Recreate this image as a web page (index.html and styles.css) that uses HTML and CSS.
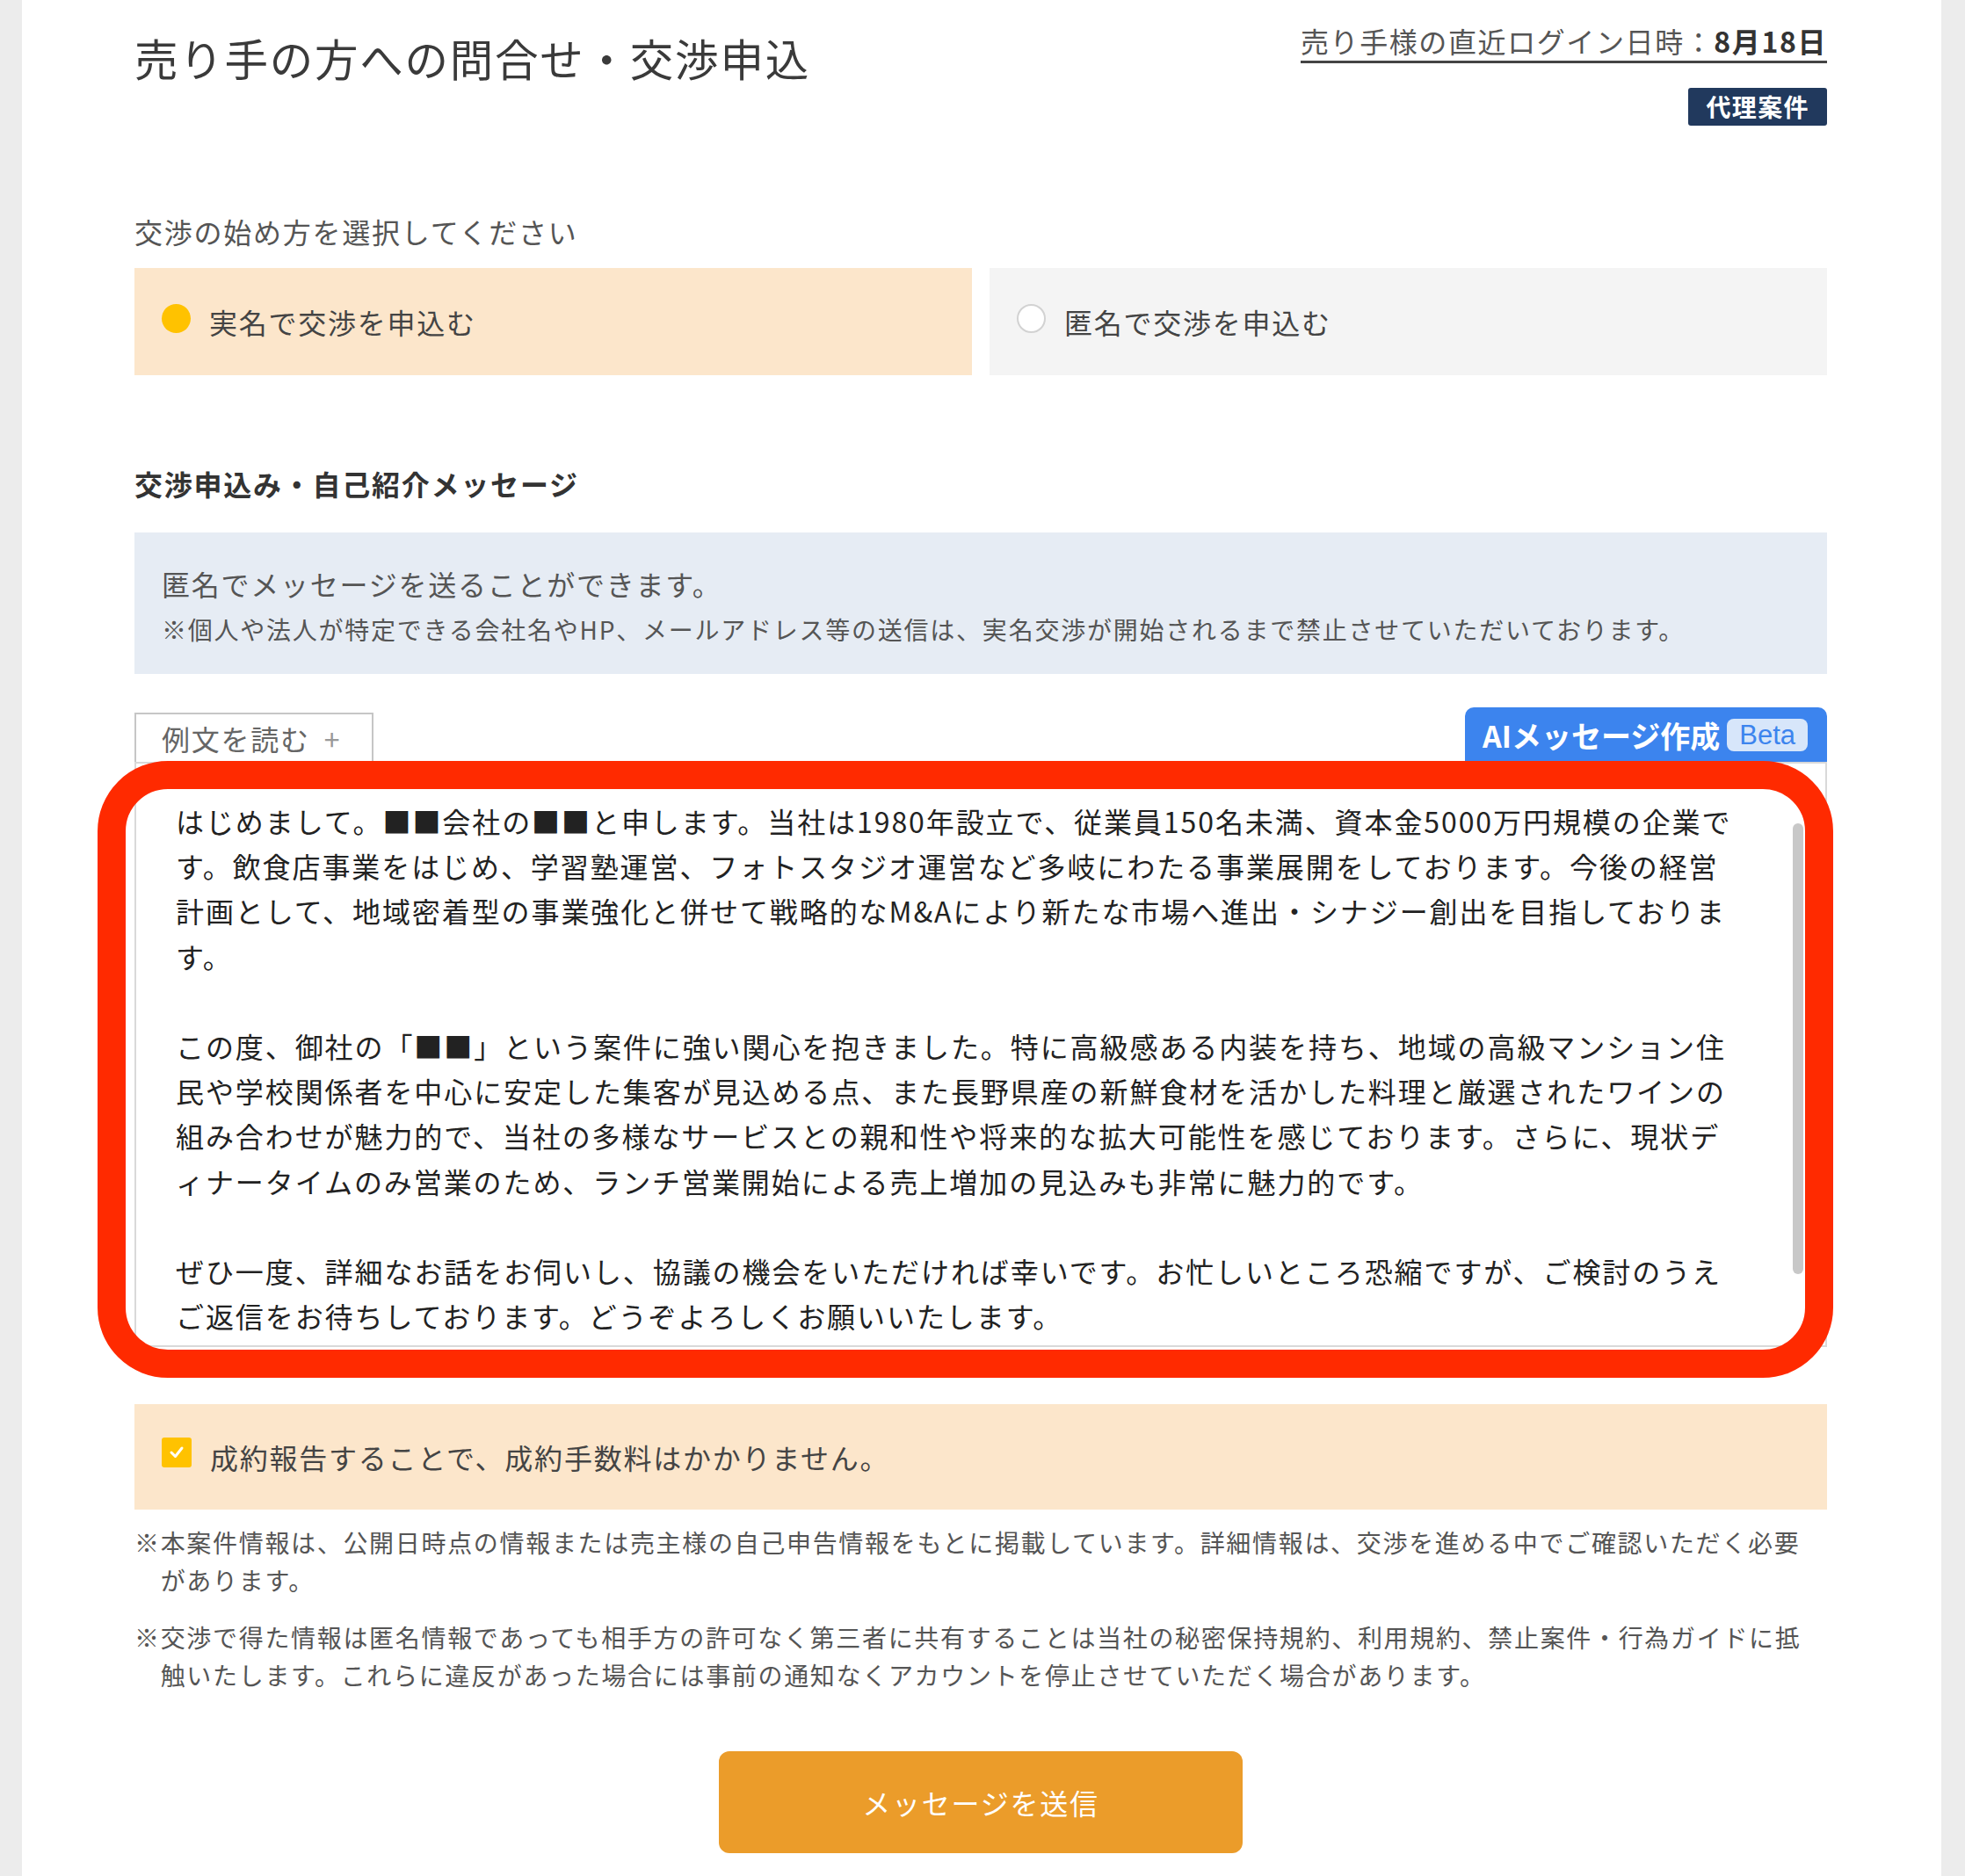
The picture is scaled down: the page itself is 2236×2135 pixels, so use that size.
FILE: index.html
```html
<!DOCTYPE html>
<html lang="ja">
<head>
	<meta charset="utf-8">
	<meta name="viewport" content="width=device-width, initial-scale=1">
	<link rel="stylesheet" href="styles.css">
</head>
<body>
<div class="page">
   <div class="header">
      <h1 class="title">売り手の方への問合せ・交渉申込</h1>
      <div class="header-meta">
         <p class="last-login">売り手様の直近ログイン日時：<strong>8月18日</strong></p>
         <span class="badge">代理案件</span>
      </div>
   </div>

   <p class="field-label">交渉の始め方を選択してください</p>
   <div class="choice-row">
      <label class="choice is-active"><span class="radio"></span>実名で交渉を申込む</label>
      <label class="choice"><span class="radio"></span>匿名で交渉を申込む</label>
   </div>

   <h2 class="section-title">交渉申込み・自己紹介メッセージ</h2>
   <div class="notice">
      <p class="notice-main">匿名でメッセージを送ることができます。</p>
      <p class="notice-sub">※個人や法人が特定できる会社名やHP、メールアドレス等の送信は、実名交渉が開始されるまで禁止させていただいております。</p>
   </div>

   <div class="tool-row">
      <button class="example-tab">例文を読む<span class="plus">+</span></button>
      <button class="ai-btn">AIメッセージ作成<span class="beta">Beta</span></button>
   </div>
   <div class="message-field">
      <textarea class="message" wrap="off" readonly>はじめまして。■■会社の■■と申します。当社は1980年設立で、従業員150名未満、資本金5000万円規模の企業で
す。飲食店事業をはじめ、学習塾運営、フォトスタジオ運営など多岐にわたる事業展開をしております。今後の経営
計画として、地域密着型の事業強化と併せて戦略的なM&amp;Aにより新たな市場へ進出・シナジー創出を目指しておりま
す。

この度、御社の「■■」という案件に強い関心を抱きました。特に高級感ある内装を持ち、地域の高級マンション住
民や学校関係者を中心に安定した集客が見込める点、また長野県産の新鮮食材を活かした料理と厳選されたワインの
組み合わせが魅力的で、当社の多様なサービスとの親和性や将来的な拡大可能性を感じております。さらに、現状デ
ィナータイムのみ営業のため、ランチ営業開始による売上増加の見込みも非常に魅力的です。

ぜひ一度、詳細なお話をお伺いし、協議の機会をいただければ幸いです。お忙しいところ恐縮ですが、ご検討のうえ
ご返信をお待ちしております。どうぞよろしくお願いいたします。</textarea>
      <span class="scroll-thumb"></span>
      <span class="highlight"></span>
   </div>

   <label class="agree">
      <span class="checkbox">
         <svg width="34" height="34" viewBox="0 0 34 34"><polyline points="11,17 15.5,21.5 23,12" fill="none" stroke="#fff" stroke-width="3" stroke-linecap="round" stroke-linejoin="round"/></svg>
      </span>
      成約報告することで、成約手数料はかかりません。
   </label>

   <div class="notes">
      <p>※本案件情報は、公開日時点の情報または売主様の自己申告情報をもとに掲載しています。詳細情報は、交渉を進める中でご確認いただく必要があります。</p>
      <p>※交渉で得た情報は匿名情報であっても相手方の許可なく第三者に共有することは当社の秘密保持規約、利用規約、禁止案件・行為ガイドに抵触いたします。これらに違反があった場合には事前の通知なくアカウントを停止させていただく場合があります。</p>
   </div>

   <div class="submit-wrap">
      <button class="submit">メッセージを送信</button>
   </div>
</div>
</body>
</html>
```

FILE: styles.css
```css
body {
   margin: 0;
   min-height: 100vh;
   background: #ececec;
   font-family: "Noto Sans CJK JP", sans-serif;
   font-size: 32px;
   line-height: 1.5;
   color: #444;
   letter-spacing: 0.055em;
}

p,
h1,
h2 {
   margin: 0;
}

button {
   font: inherit;
   letter-spacing: inherit;
   border: none;
   cursor: pointer;
}

.page {
   box-sizing: border-box;
   min-height: 100vh;
   margin: 0 27px 0 25px;
   padding: 23px 130px 0 128px;
   background: #fff;
}

/* header */

.header {
   display: flex;
   justify-content: space-between;
   align-items: flex-start;
}

.title {
   margin-top: 6px;
   font-size: 49.5px;
   line-height: 73.5px;
   font-weight: 400;
   color: #3a3a3a;
}

.header-meta {
   display: flex;
   flex-direction: column;
   align-items: flex-end;
}

.last-login {
   font-size: 32px;
   line-height: 46px;
   letter-spacing: 0.05em;
   color: #555;
   border-bottom: 3px solid #444;
}

.last-login strong {
   color: #333;
}

.badge {
   margin-top: 28px;
   padding: 0 20px;
   background: #21395d;
   color: #fff;
   font-size: 28px;
   font-weight: 700;
   line-height: 43px;
   letter-spacing: 0.05em;
   border-radius: 3px;
}

/* choice */

.field-label {
   margin-top: 96px;
   line-height: 48px;
   color: #555;
}

.choice-row {
   display: grid;
   grid-template-columns: 1fr 1fr;
   gap: 20px;
   margin-top: 18px;
}

.choice {
   display: flex;
   align-items: center;
   padding: 37px 31px;
   line-height: 48px;
   background: #f4f4f4;
   color: #444;
   cursor: pointer;
}

.choice .radio {
   box-sizing: border-box;
   width: 33px;
   height: 33px;
   margin: 0 21px 8px 0;
   border-radius: 50%;
   border: 2px solid #d2d2d2;
   background: #fff;
}

.choice.is-active {
   background: #fce6cb;
}

.choice.is-active .radio {
   border: none;
   background: #ffc200;
}

/* message */

.section-title {
   margin-top: 99px;
   font-size: 32px;
   line-height: 48px;
   font-weight: 700;
   color: #333;
}

.notice {
   margin-top: 32px;
   padding: 33px 30px 28px 31px;
   background: #e6ecf4;
   color: #555;
}

.notice-main {
   line-height: 51.2px;
}

.notice-sub {
   margin-top: 4px;
   font-size: 28px;
   line-height: 44.8px;
}

.tool-row {
   display: flex;
   justify-content: space-between;
   align-items: flex-end;
   margin-top: 38px;
}

.example-tab {
   box-sizing: border-box;
   height: 56px;
   padding: 0 35px 0 29px;
   border: 2px solid #c6c6c6;
   border-bottom: none;
   background: #fff;
   color: #666;
   line-height: 54px;
}

.example-tab .plus {
   margin-left: 16px;
   color: #999;
}

.ai-btn {
   display: flex;
   align-items: center;
   height: 62px;
   padding: 0 22px 0 20px;
   background: #3c84ee;
   color: #fff;
   font-size: 34px;
   font-weight: 700;
   letter-spacing: 0;
   border-radius: 10px 10px 0 0;
}

.beta {
   margin-left: 8px;
   padding: 0 14px;
   height: 37px;
   line-height: 37px;
   background: #d7e6fa;
   color: #3c84ee;
   font-family: "Liberation Sans", sans-serif;
   font-size: 31px;
   font-weight: 400;
   border-radius: 8px;
}

.message-field {
   position: relative;
}

.message {
   display: block;
   box-sizing: border-box;
   width: 100%;
   height: 666px;
   margin: 0;
   padding: 40px 45px 0 45px;
   border: 2px solid #d9d9d9;
   background: #fff;
   font-family: "Noto Sans CJK JP", sans-serif;
   font-size: 32px;
   line-height: 51.2px;
   letter-spacing: 0.06em;
   color: #222;
   resize: none;
   outline: none;
   overflow: hidden;
}

.scroll-thumb {
   position: absolute;
   top: 70px;
   right: 27px;
   width: 12px;
   height: 513px;
   border-radius: 6px;
   background: #c8c8c8;
}

/* annotation frame drawn over the textarea */
.highlight {
   position: absolute;
   top: -1px;
   left: -42px;
   right: -7px;
   bottom: -35px;
   border: 32px solid #ff2a00;
   border-radius: 80px;
   pointer-events: none;
}

/* agreement */

.agree {
   display: flex;
   align-items: center;
   margin-top: 65px;
   padding: 36px 31px;
   line-height: 48px;
   background: #fce6cb;
   color: #444;
}

.checkbox {
   display: flex;
   width: 34px;
   height: 34px;
   margin: 0 21px 10px 0;
   border-radius: 3px;
   background: #ffc200;
}

.notes {
   margin-top: 16px;
   padding-right: 10px;
}

.notes p {
   padding-left: 1.06em;
   text-indent: -1.06em;
   font-size: 28px;
   line-height: 43.4px;
   letter-spacing: 0.06em;
   color: #555;
}

.notes p + p {
   margin-top: 21px;
}

.submit-wrap {
   display: flex;
   justify-content: center;
   margin-top: 64px;
}

.submit {
   width: 596px;
   height: 116px;
   border-radius: 12px;
   background: #eb9c2a;
   color: #fff;
}
```
